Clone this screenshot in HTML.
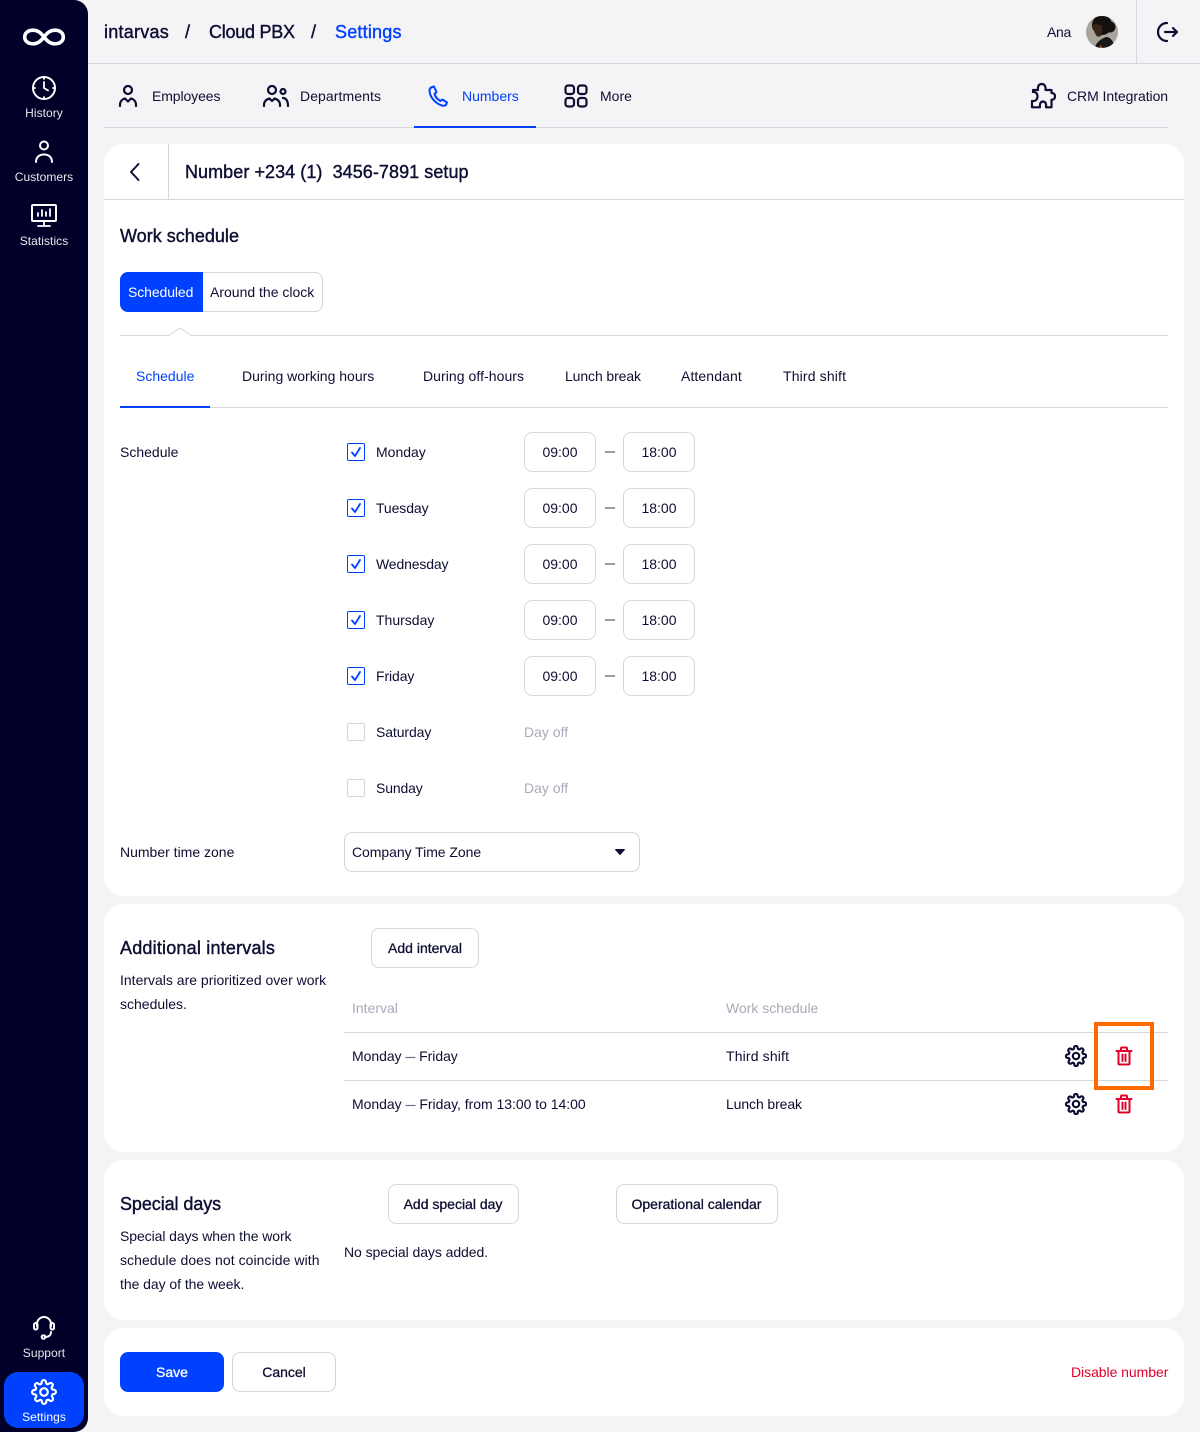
<!DOCTYPE html>
<html><head><meta charset="utf-8"><title>Settings</title>
<style>
*{box-sizing:border-box}
html,body{margin:0;padding:0}
body{width:1200px;height:1432px;position:relative;overflow:hidden;background:#f4f4f7;font-family:"Liberation Sans",sans-serif;font-size:14px;color:#0e0e33}
.a,.t,.b,svg.i{position:absolute}
.t{white-space:nowrap;line-height:20px;letter-spacing:0}
.c{transform:translateX(-50%);text-align:center}
.h{font-size:18px;line-height:24px;font-weight:400;-webkit-text-stroke:.4px #0e0e33}
.m{-webkit-text-stroke:.3px currentColor}
.blue{color:#0041ff}.gray{color:#a9a9b8}.red{color:#e0002a}
.side{font-size:12px;color:#e8e8ee;letter-spacing:.05px;line-height:16px}
.b{background:#fff;border:1px solid #d6d6de;border-radius:8px;text-align:center;line-height:38px;height:40px}
.card{position:absolute;left:104px;width:1080px;background:#fff;border-radius:20px}
.l{position:absolute;background:#d6d6de;height:1px}
svg.i{fill:none;stroke:#0e0e33;stroke-width:2;stroke-linecap:round;stroke-linejoin:round}
svg.w{stroke:#fff}
.cb{position:absolute;width:18px;height:18px;border:1px solid #0041ff;border-radius:2px;background:#fff}
.cb.off{border-color:#d6d6de}
.d{position:absolute;left:605px;width:10px;height:2px;background:#9a9aa9}
.e{font-size:10px;position:relative;top:-1px}
</style></head><body>

<div class="a" style="left:0;top:0;width:88px;height:1432px;background:#000028;border-radius:0 14px 14px 0"></div>
<svg class="i w" style="left:22px;top:26px;stroke-width:3.6" width="44" height="22" viewBox="0 0 44 22"><path d="M22 11C18.500 6.500 15.500 4.200 11 4.200 6 4.200 2.700 7 2.700 11s3.300 6.800 8.300 6.800C15.500 17.800 18.500 15.500 22 11c3.500-4.500 6.500-6.800 11-6.800 5 0 8.300 2.800 8.300 6.800s-3.300 6.800-8.300 6.800C28.500 17.800 25.500 15.500 22 11z"/></svg>
<svg class="i w" style="left:32px;top:76px" width="24" height="24" viewBox="0 0 24 24"><circle cx="12" cy="12" r="11"/><path d="M12 6v6l4 2.500M12 1v2M12 21v2M1 12h2M21 12h2" stroke-width="1.800"/></svg>
<div class="t c side" style="left:44px;top:105px">History</div>
<svg class="i w" style="left:32px;top:140px" width="24" height="24" viewBox="0 0 24 24"><circle cx="12" cy="5.500" r="4"/><path d="M4 22c0-5 3.500-7.500 8-7.500s8 2.500 8 7.500"/></svg>
<div class="t c side" style="left:44px;top:169px">Customers</div>
<svg class="i w" style="left:30px;top:203px" width="28" height="24" viewBox="0 0 28 24"><rect x="2" y="2" width="24" height="16" rx="1"/><path d="M14 18v5M8 23h12M8 13v-3M12 13V7M16 13V9M20 13V6" stroke-width="1.800"/></svg>
<div class="t c side" style="left:44px;top:233px">Statistics</div>
<svg class="i w" style="left:32px;top:1315px" width="24" height="26" viewBox="0 0 24 26"><path d="M5 11V9a7 7 0 0 1 14 0v2M19 17c0 3-2 5-6 5"/><rect x="2" y="8" width="3.500" height="6.500" rx="1.700"/><rect x="18.500" y="8" width="3.500" height="6.500" rx="1.700"/><circle cx="11.500" cy="22" r="1.800"/></svg>
<div class="t c side" style="left:44px;top:1345px">Support</div>
<div class="a" style="left:4px;top:1372px;width:80px;height:56px;background:#0041ff;border-radius:14px"></div>
<svg class="i w" style="left:31px;top:1379px" width="26" height="26" viewBox="0 0 24 24"><circle cx="12" cy="12" r="3.500"/><path d="M19.400 15a1.650 1.650 0 0 0 .33 1.820l.06.06a2 2 0 1 1-2.830 2.830l-.06-.06a1.650 1.650 0 0 0-2.800 1.170V21a2 2 0 1 1-4 0v-.09A1.650 1.650 0 0 0 7.300 19.800l-.06.06a2 2 0 1 1-2.830-2.830l.06-.06a1.650 1.650 0 0 0-1.170-2.800H3a2 2 0 1 1 0-4h.09A1.650 1.650 0 0 0 4.200 7.300l-.06-.06a2 2 0 1 1 2.830-2.830l.06.06a1.650 1.650 0 0 0 2.800-1.170V3a2 2 0 1 1 4 0v.09a1.650 1.650 0 0 0 2.800 1.170l.06-.06a2 2 0 1 1 2.830 2.830l-.06.06a1.650 1.650 0 0 0 1.170 2.800H21a2 2 0 1 1 0 4h-.09a1.650 1.650 0 0 0-1.510 1.110z"/></svg>
<div class="t c side" style="left:44px;top:1409px;color:#fff">Settings</div>

<div class="l" style="left:88px;right:0;top:63px"></div>
<div class="t h" style="left:104px;top:20px;letter-spacing:.25px">intarvas</div>
<div class="t h" style="left:185px;top:20px">/</div>
<div class="t h" style="left:209px;top:20px;letter-spacing:-.25px">Cloud PBX</div>
<div class="t h" style="left:311px;top:20px">/</div>
<div class="t h blue" style="left:335px;top:20px;letter-spacing:.2px;-webkit-text-stroke-color:#0041ff">Settings</div>
<div class="t" style="left:1047px;top:22px;letter-spacing:-.3px">Ana</div>
<svg class="a" style="left:1086px;top:16px" width="32" height="32" viewBox="0 0 32 32"><defs><clipPath id="av"><circle cx="16" cy="16" r="16"/></clipPath></defs><g clip-path="url(#av)"><rect width="32" height="32" fill="#aaa49d"/><circle cx="16" cy="9" r="10" fill="#15110f"/><circle cx="24" cy="11" r="5.500" fill="#15110f"/><path d="M7 9c2-1 7-1 9 1 .5 4 0 8-1 10-2 1-4 1-5-1-1.500-2-2.500-6-3-10z" fill="#3d2419"/><path d="M9 32c1-6 6-9 11-11 4 0 7 3 9 11z" fill="#17171a"/><path d="M14 29l3 3h-3z" fill="#b5652c"/></g></svg>
<div class="a" style="left:1136px;top:0;width:1px;height:63px;background:#d6d6de"></div>
<svg class="i" style="left:1157px;top:21px;stroke-width:2.200" width="22" height="22" viewBox="0 0 22 22"><path d="M10 2a9 9 0 1 0 0 18M8 11h12M16 7l4 4-4 4"/></svg>

<div class="l" style="left:104px;width:1064px;top:127px"></div>
<div class="a" style="left:414px;top:126px;width:122px;height:2px;background:#0041ff"></div>
<svg class="i" style="left:116px;top:84px;stroke-width:2.200" width="24" height="24" viewBox="0 0 24 24"><circle cx="12" cy="6" r="4"/><path d="M4 22v-1c0-4 2.500-6 5-6.500l3 3 3-3c2.500.5 5 2.500 5 6.500v1"/></svg>
<div class="t" style="left:152px;top:86px;letter-spacing:-.1px">Employees</div>
<svg class="i" style="left:262px;top:84px;stroke-width:2.200" width="28" height="24" viewBox="0 0 28 24"><circle cx="10" cy="6" r="4"/><circle cx="21" cy="7.500" r="2.500"/><path d="M2 22v-1c0-4 3-6 5.500-6.500L10 17l2.500-2.500C15 15 18 17 18 21v1M21 14c3 0 5 3 5 8"/></svg>
<div class="t" style="left:300px;top:86px;letter-spacing:.08px">Departments</div>
<svg class="i" style="left:426px;top:84px;stroke:#0041ff" width="24" height="24" viewBox="0 0 24 24"><path d="M5 3.500 8 2.500 10.500 8 8.500 10c1 3 3 5.500 6 7l2-1.500 4.500 3-1 2.500c-1 .8-3 1-5 .2C9 19 4 13 3.500 7c-.1-1.500.5-2.800 1.500-3.500z"/></svg>
<div class="t blue" style="left:462px;top:86px">Numbers</div>
<svg class="i" style="left:564px;top:84px;stroke-width:2.200" width="24" height="24" viewBox="0 0 24 24"><rect x="1.500" y="1.500" width="8.500" height="8.500" rx="2.500"/><rect x="14" y="1.500" width="8.500" height="8.500" rx="2.500"/><rect x="1.500" y="14" width="8.500" height="8.500" rx="2.500"/><rect x="14" y="14" width="8.500" height="8.500" rx="2.500"/></svg>
<div class="t" style="left:600px;top:86px">More</div>
<svg class="i" style="left:1030px;top:82px;stroke-width:2.200" width="26" height="28" viewBox="0 0 26 28"><path d="M3 8H8C7.500 4 9 2 11.700 2 14.400 2 16 4 15.500 8H21.500V11C24 10.800 25 12.500 25 14.300 25 16.200 24 18 21.500 17.700V25.300H16C16.500 22 15.500 19.500 13 19.500 10.500 19.500 9.500 22 10 25.300H2V19C5.500 19.500 7.500 17.500 7.500 14.300 7.500 11.500 5.500 9.500 3 10Z"/></svg>
<div class="t" style="left:1067px;top:86px;letter-spacing:-.06px">CRM Integration</div>

<div class="card" style="top:144px;height:752px"></div>
<div class="l" style="left:104px;width:1080px;top:199px"></div>
<div class="a" style="left:168px;top:144px;width:1px;height:55px;background:#d6d6de"></div>
<svg class="i" style="left:128px;top:162px" width="14" height="20" viewBox="0 0 14 20"><path d="M10.500 2 3 10l7.500 8"/></svg>
<div class="t h" style="left:185px;top:160px;letter-spacing:.06px">Number +234 (1)&nbsp; 3456-7891 setup</div>
<div class="t h" style="left:120px;top:224px;letter-spacing:.02px">Work schedule</div>

<div class="a" style="left:120px;top:272px;width:203px;height:40px;background:#fff;border:1px solid #d6d6de;border-radius:8px"></div>
<div class="a" style="left:120px;top:272px;width:83px;height:40px;background:#0041ff;border-radius:8px 0 0 8px"></div>
<div class="t" style="left:128px;top:282px;color:#fff;letter-spacing:-.1px">Scheduled</div>
<div class="t" style="left:210px;top:282px">Around the clock</div>

<div class="l" style="left:120px;width:1048px;top:335px"></div>
<svg class="a" style="left:168px;top:327px" width="24" height="10" viewBox="0 0 24 10"><path d="M0 9 12 1l12 8" fill="#fff" stroke="#d6d6de"/><rect x="2" y="8.500" width="20" height="1.500" fill="#fff"/></svg>

<div class="l" style="left:120px;width:1048px;top:407px"></div>
<div class="a" style="left:120px;top:406px;width:90px;height:2px;background:#0041ff"></div>
<div class="t blue" style="left:136px;top:366px">Schedule</div>
<div class="t" style="left:242px;top:366px">During working hours</div>
<div class="t" style="left:423px;top:366px;letter-spacing:.06px">During off-hours</div>
<div class="t" style="left:565px;top:366px;letter-spacing:-.1px">Lunch break</div>
<div class="t" style="left:681px;top:366px;letter-spacing:.1px">Attendant</div>
<div class="t" style="left:783px;top:366px;letter-spacing:.15px">Third shift</div>

<div class="t" style="left:120px;top:442px">Schedule</div>

<div class="cb" style="left:347px;top:443px"></div><svg class="i" style="left:347px;top:443px;stroke:#0041ff" width="18" height="18" viewBox="0 0 18 18"><path d="m5 9.500 3 3.500 5-8" stroke-width="1.800"/></svg>
<div class="t" style="left:376px;top:442px">Monday</div>
<div class="b" style="left:524px;top:432px;width:72px">09:00</div><div class="d" style="top:451px"></div><div class="b" style="left:623px;top:432px;width:72px">18:00</div>

<div class="cb" style="left:347px;top:499px"></div><svg class="i" style="left:347px;top:499px;stroke:#0041ff" width="18" height="18" viewBox="0 0 18 18"><path d="m5 9.500 3 3.500 5-8" stroke-width="1.800"/></svg>
<div class="t" style="left:376px;top:498px;letter-spacing:-.1px">Tuesday</div>
<div class="b" style="left:524px;top:488px;width:72px">09:00</div><div class="d" style="top:507px"></div><div class="b" style="left:623px;top:488px;width:72px">18:00</div>

<div class="cb" style="left:347px;top:555px"></div><svg class="i" style="left:347px;top:555px;stroke:#0041ff" width="18" height="18" viewBox="0 0 18 18"><path d="m5 9.500 3 3.500 5-8" stroke-width="1.800"/></svg>
<div class="t" style="left:376px;top:554px;letter-spacing:-.15px">Wednesday</div>
<div class="b" style="left:524px;top:544px;width:72px">09:00</div><div class="d" style="top:563px"></div><div class="b" style="left:623px;top:544px;width:72px">18:00</div>

<div class="cb" style="left:347px;top:611px"></div><svg class="i" style="left:347px;top:611px;stroke:#0041ff" width="18" height="18" viewBox="0 0 18 18"><path d="m5 9.500 3 3.500 5-8" stroke-width="1.800"/></svg>
<div class="t" style="left:376px;top:610px">Thursday</div>
<div class="b" style="left:524px;top:600px;width:72px">09:00</div><div class="d" style="top:619px"></div><div class="b" style="left:623px;top:600px;width:72px">18:00</div>

<div class="cb" style="left:347px;top:667px"></div><svg class="i" style="left:347px;top:667px;stroke:#0041ff" width="18" height="18" viewBox="0 0 18 18"><path d="m5 9.500 3 3.500 5-8" stroke-width="1.800"/></svg>
<div class="t" style="left:376px;top:666px;letter-spacing:-.1px">Friday</div>
<div class="b" style="left:524px;top:656px;width:72px">09:00</div><div class="d" style="top:675px"></div><div class="b" style="left:623px;top:656px;width:72px">18:00</div>

<div class="cb off" style="left:347px;top:723px"></div>
<div class="t" style="left:376px;top:722px;letter-spacing:-.1px">Saturday</div>
<div class="t gray" style="left:524px;top:722px">Day off</div>
<div class="cb off" style="left:347px;top:779px"></div>
<div class="t" style="left:376px;top:778px;letter-spacing:-.15px">Sunday</div>
<div class="t gray" style="left:524px;top:778px">Day off</div>

<div class="t" style="left:120px;top:842px">Number time zone</div>
<div class="a" style="left:344px;top:832px;width:296px;height:40px;background:#fff;border:1px solid #d6d6de;border-radius:8px"></div>
<div class="t" style="left:352px;top:842px;letter-spacing:-.05px">Company Time Zone</div>
<svg class="a" style="left:615px;top:849px" width="10" height="6" viewBox="0 0 10 6"><path d="M.5.500h9L5 5.500z" fill="#0e0e33" stroke="#0e0e33" stroke-linejoin="round"/></svg>

<div class="card" style="top:904px;height:248px"></div>
<div class="t h" style="left:120px;top:936px;letter-spacing:.2px">Additional intervals</div>
<div class="b m" style="left:371px;top:928px;width:108px">Add interval</div>
<div class="t" style="left:120px;top:970px">Intervals are prioritized over work</div>
<div class="t" style="left:120px;top:994px">schedules.</div>
<div class="t gray" style="left:352px;top:998px">Interval</div>
<div class="t gray" style="left:726px;top:998px">Work schedule</div>
<div class="l" style="left:344px;width:824px;top:1032px"></div>
<div class="l" style="left:344px;width:824px;top:1080px"></div>
<div class="t" style="left:352px;top:1046px;letter-spacing:-.05px">Monday <span class="e">—</span> Friday</div>
<div class="t" style="left:726px;top:1046px;letter-spacing:.15px">Third shift</div>
<div class="t" style="left:352px;top:1094px;letter-spacing:-.03px">Monday <span class="e">—</span> Friday, from 13:00 to 14:00</div>
<div class="t" style="left:726px;top:1094px;letter-spacing:-.1px">Lunch break</div>

<svg class="i" style="left:1065px;top:1045px;stroke-width:2.400" width="22" height="22" viewBox="0 0 24 24"><circle cx="12" cy="12" r="3.500"/><path d="M19.400 15a1.650 1.650 0 0 0 .33 1.820l.06.06a2 2 0 1 1-2.830 2.830l-.06-.06a1.650 1.650 0 0 0-2.800 1.170V21a2 2 0 1 1-4 0v-.09A1.650 1.650 0 0 0 7.300 19.800l-.06.06a2 2 0 1 1-2.830-2.830l.06-.06a1.650 1.650 0 0 0-1.170-2.800H3a2 2 0 1 1 0-4h.09A1.650 1.650 0 0 0 4.200 7.300l-.06-.06a2 2 0 1 1 2.830-2.830l.06.06a1.650 1.650 0 0 0 2.800-1.170V3a2 2 0 1 1 4 0v.09a1.650 1.650 0 0 0 2.800 1.170l.06-.06a2 2 0 1 1 2.830 2.830l-.06.06a1.650 1.650 0 0 0 1.170 2.800H21a2 2 0 1 1 0 4h-.09a1.650 1.650 0 0 0-1.510 1.110z"/></svg>
<svg class="i" style="left:1065px;top:1093px;stroke-width:2.400" width="22" height="22" viewBox="0 0 24 24"><circle cx="12" cy="12" r="3.500"/><path d="M19.400 15a1.650 1.650 0 0 0 .33 1.820l.06.06a2 2 0 1 1-2.830 2.830l-.06-.06a1.650 1.650 0 0 0-2.800 1.170V21a2 2 0 1 1-4 0v-.09A1.650 1.650 0 0 0 7.300 19.800l-.06.06a2 2 0 1 1-2.830-2.830l.06-.06a1.650 1.650 0 0 0-1.170-2.800H3a2 2 0 1 1 0-4h.09A1.650 1.650 0 0 0 4.200 7.300l-.06-.06a2 2 0 1 1 2.830-2.830l.06.06a1.650 1.650 0 0 0 2.800-1.170V3a2 2 0 1 1 4 0v.09a1.650 1.650 0 0 0 2.800 1.170l.06-.06a2 2 0 1 1 2.830 2.830l-.06.06a1.650 1.650 0 0 0 1.170 2.800H21a2 2 0 1 1 0 4h-.09a1.650 1.650 0 0 0-1.510 1.110z"/></svg>
<svg class="i" style="left:1114px;top:1046px;stroke:#e0002a" width="20" height="20" viewBox="0 0 20 20"><path d="M2.500 5h15M7 5V2.500c0-.6.400-1 1-1h4c.6 0 1 .4 1 1V5M4.500 5v12.500c0 .6.400 1 1 1h9c.6 0 1-.4 1-1V5M8.500 8.500v6.500M11.500 8.500v6.500"/></svg>
<svg class="i" style="left:1114px;top:1094px;stroke:#e0002a" width="20" height="20" viewBox="0 0 20 20"><path d="M2.500 5h15M7 5V2.500c0-.6.400-1 1-1h4c.6 0 1 .4 1 1V5M4.500 5v12.500c0 .6.400 1 1 1h9c.6 0 1-.4 1-1V5M8.500 8.500v6.500M11.500 8.500v6.500"/></svg>
<div class="a" style="left:1094px;top:1022px;width:60px;height:68px;border:4px solid #ff6a00"></div>

<div class="card" style="top:1160px;height:160px"></div>
<div class="t h" style="left:120px;top:1192px;letter-spacing:-.08px">Special days</div>
<div class="b m" style="left:387.500px;top:1184px;width:131px">Add special day</div>
<div class="b m" style="left:615.500px;top:1184px;width:162px">Operational calendar</div>
<div class="t" style="left:120px;top:1226px;letter-spacing:-.08px">Special days when the work</div>
<div class="t" style="left:120px;top:1250px;letter-spacing:.06px">schedule does not coincide with</div>
<div class="t" style="left:120px;top:1274px;letter-spacing:-.05px">the day of the week.</div>
<div class="t" style="left:344px;top:1242px;letter-spacing:-.07px">No special days added.</div>

<div class="card" style="top:1328px;height:88px"></div>
<div class="b m" style="left:120px;top:1352px;width:104px;background:#0041ff;border-color:#0041ff;color:#fff">Save</div>
<div class="b m" style="left:232px;top:1352px;width:104px">Cancel</div>
<div class="t red" style="left:1071px;top:1362px;letter-spacing:-.05px">Disable number</div>
</body></html>
